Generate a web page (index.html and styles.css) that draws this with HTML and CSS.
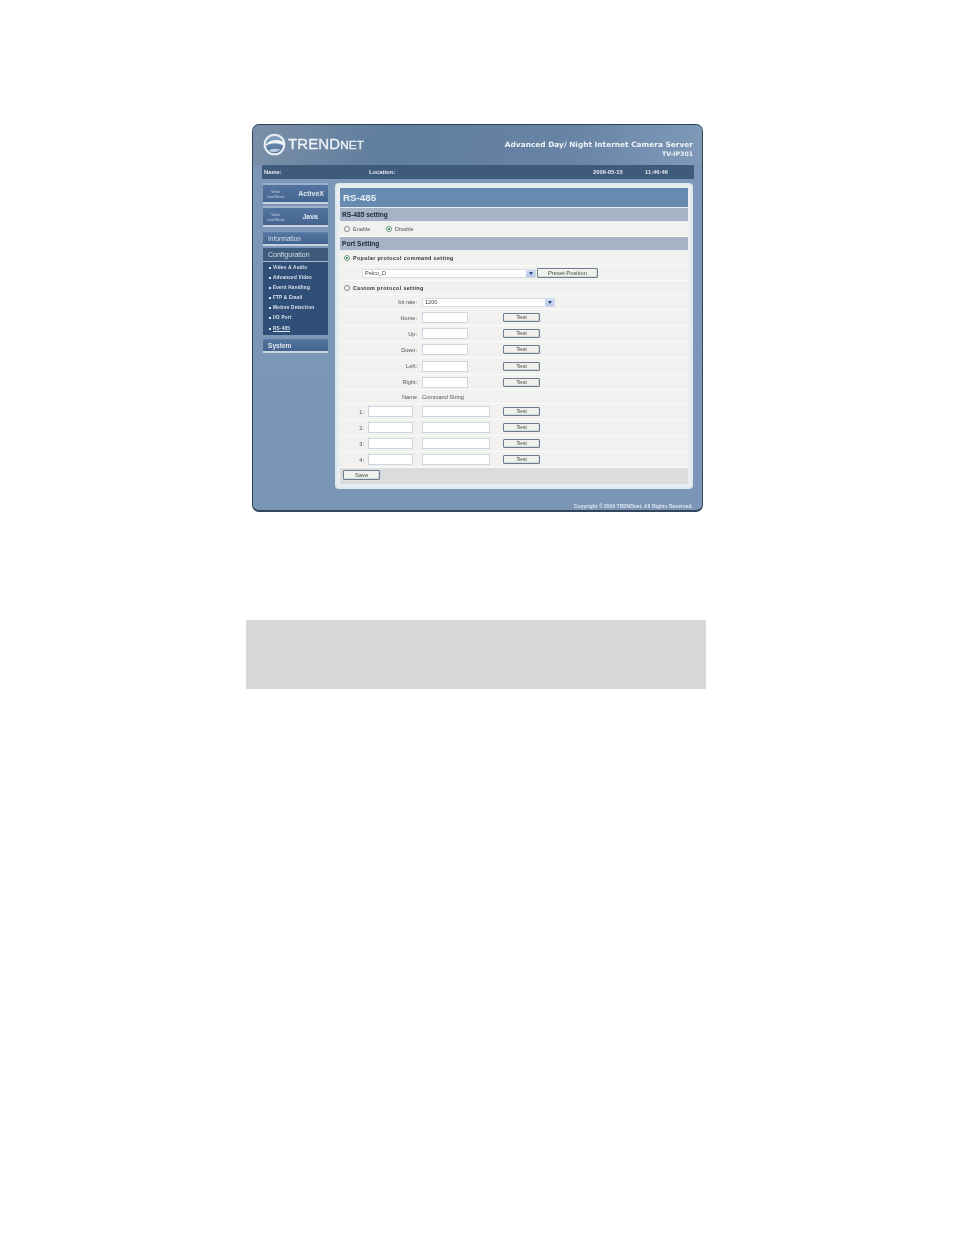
FILE: index.html
```html
<!DOCTYPE html>
<html lang="en">
<head>
<meta charset="utf-8">
<title>RS-485</title>
<link rel="stylesheet" href="styles.css">
</head>
<body>
<div class="page">
  <div class="shot">
    <header class="top">
      <div class="logo">
        <svg class="globe" viewBox="0 0 24 24" width="23" height="23" aria-hidden="true">
          <defs>
            <linearGradient id="gl" x1="0" y1="0" x2="0" y2="1">
              <stop offset="0" stop-color="#8fa9c4"/>
              <stop offset="1" stop-color="#3f6690"/>
            </linearGradient>
          </defs>
          <circle cx="12" cy="12" r="10.2" fill="url(#gl)" stroke="#e6ecf2" stroke-width="2.2"/>
          <path d="M3 12c4-5 12-6 18-3 .6 1.500.6 3 .3 4-6-3-12-3-18 0z" fill="#eef3f7"/>
          <path d="M6 18c4-2 8-2 12-1-3 4-9 4-12 1z" fill="#b9cbdc"/>
        </svg>
        <span class="brand">TREND<span class="brand-net">NET</span></span>
      </div>
      <div class="product">
        <div class="product-name">Advanced Day/ Night Internet Camera Server</div>
        <div class="product-model">TV-IP301</div>
      </div>
    </header>
    <div class="status">
      <span class="st-name">Name:</span>
      <span class="st-loc">Location:</span>
      <span class="st-date">2006-05-15</span>
      <span class="st-time">11:46:46</span>
    </div>
    <div class="body">
      <nav class="side">
        <a class="live"><span class="live-l">View<br>LiveShow</span><span class="live-r">ActiveX</span></a>
        <a class="live"><span class="live-l">View<br>LiveShow</span><span class="live-r live-j">Java</span></a>
        <a class="navbtn nav-info">Information</a>
        <div class="config">
          <div class="navbtn nav-conf">Configuration</div>
          <ul class="sub">
            <li>Video &amp; Audio</li>
            <li>Advanced Video</li>
            <li>Event Handling</li>
            <li>FTP &amp; Email</li>
            <li>Motion Detection</li>
            <li>I/O Port</li>
            <li class="cur">RS-485</li>
          </ul>
        </div>
        <a class="navbtn nav-sys">System</a>
      </nav>
      <main class="panel">
        <h1 class="title">RS-485</h1>
        <h2 class="bar bar-a">RS-485 setting</h2>
        <div class="row r15 radios">
          <label class="radio"><i class="dot"></i>Enable</label>
          <label class="radio"><i class="dot on"></i>Disable</label>
        </div>
        <h2 class="bar bar-b">Port Setting</h2>
        <div class="row r15 bold"><label class="radio"><i class="dot on"></i>Popular protocol command setting</label></div>
        <div class="row r15 selrow">
          <div class="select sel-a"><span>Pelco_D</span><b class="arrow"></b></div>
          <div class="btn btn-preset">Preset Position</div>
        </div>
        <div class="row r14 bold"><label class="radio"><i class="dot"></i>Custom protocol setting</label></div>
        <div class="row r15">
          <span class="lab">bit rate:</span>
          <div class="select sel-b"><span>1200</span><b class="arrow"></b></div>
        </div>
        <div class="row r16"><span class="lab">Home:</span><div class="inp i46"></div><div class="btn btn-test">Test</div></div>
        <div class="row r16"><span class="lab">Up:</span><div class="inp i46"></div><div class="btn btn-test">Test</div></div>
        <div class="row r16"><span class="lab">Down:</span><div class="inp i46"></div><div class="btn btn-test">Test</div></div>
        <div class="row r17"><span class="lab">Left:</span><div class="inp i46"></div><div class="btn btn-test">Test</div></div>
        <div class="row r15"><span class="lab">Right:</span><div class="inp i46"></div><div class="btn btn-test">Test</div></div>
        <div class="row r14"><span class="lab">Name</span><span class="cmd">Command String</span></div>
        <div class="row r16"><span class="num">1:</span><div class="inp i45"></div><div class="inp i68"></div><div class="btn btn-test t2">Test</div></div>
        <div class="row r16"><span class="num">2:</span><div class="inp i45"></div><div class="inp i68"></div><div class="btn btn-test t2">Test</div></div>
        <div class="row r16"><span class="num">3:</span><div class="inp i45"></div><div class="inp i68"></div><div class="btn btn-test t2">Test</div></div>
        <div class="row r16"><span class="num">4:</span><div class="inp i45"></div><div class="inp i68"></div><div class="btn btn-test t2">Test</div></div>
        <div class="savebar"><div class="btn btn-save">Save</div></div>
      </main>
    </div>
    <footer class="copy">Copyright © 2006 TRENDnet. All Rights Reserved.</footer>
  </div>
  <div class="graybox"></div>
</div>
</body>
</html>
```
FILE: styles.css
```css
* { box-sizing: border-box; }
html, body { margin: 0; padding: 0; background: #fff; }
body { font-family: "Liberation Sans", Arial, sans-serif; color: #333; }
.page { width: 954px; height: 1235px; padding-top: 124px; position: relative; }

.shot {
  margin-left: 252px; width: 451px; height: 388px;
  background: linear-gradient(180deg, #5f7d9e 0, #7d97b8 12%, #7b95b6 100%);
  border: 1px solid #33465c; border-radius: 7px;
  border-top-color: #2f4055; border-bottom-width: 2px;
  overflow: hidden; filter: blur(.35px);
}
.top {
  height: 40px; padding: 0 9px 0 10px;
  display: flex; justify-content: space-between; align-items: flex-start;
  background: linear-gradient(100deg, #7a8fa8 0, #5f7d9e 30%, #6884a5 70%, #7f99b9 100%);
}
.logo { display: flex; align-items: center; gap: 2px; padding-top: 8px; }
.globe { display: block; }
.brand { font-size: 15px; line-height: 20px; color: #eef2f6; letter-spacing: .1px; -webkit-text-stroke: .35px #eef2f6; }
.brand-net { font-size: 11.8px; }
.product { text-align: right; padding-top: 15px; color: #eef2f6; font-weight: 700; font-family: "DejaVu Sans", sans-serif; }
.product-name { font-size: 7.35px; line-height: 9px; letter-spacing: .03px; }
.product-model { font-size: 6.2px; line-height: 9px; }

.status {
  margin-left: 9px; width: 432px; height: 14px;
  background: #3f5b7c; color: #e4eaf0; font-size: 5.8px; font-weight: 700; line-height: 14px;
  display: flex; padding-left: 2px;
}
.st-name { width: 105px; }
.st-loc { width: 224px; }
.st-date { width: 52px; }

.body { display: flex; padding: 4px 0 0 10px; align-items: flex-start; }
.side { width: 65px; display: flex; flex-direction: column; margin-right: 7px; }
.live {
  height: 21px; display: flex; align-items: center; justify-content: space-between; margin-bottom: 2px;
  background: linear-gradient(180deg, #52749f, #446590); border-top: 2px solid #9cb0c9; border-bottom: 2px solid #c7d3e1;
  padding: 0 4px;
}
.live-l { font-size: 4px; line-height: 5px; text-align: center; color: #c9d5e3; }
.live-r { font-size: 7px; font-weight: 700; color: #dfe6ee; }
.live-j { padding-right: 6px; }
.navbtn {
  height: 14px; font-size: 6.6px; line-height: 11px; color: #d6dfea; padding-left: 5px;
  background: linear-gradient(180deg, #52749f, #446590); border-bottom: 2px solid #c7d3e1; border-top: 1px solid #5c7ea8;
}
.nav-info { margin-top: 3px; }
.config { margin-top: 2px; background: #2f4f78; height: 87px; }
.nav-conf { background: #3f5b7c; border-bottom: 1px solid #a9bacd; font-size: 7px; height: 14px; line-height: 13px; border-top: 0; }
.sub { list-style: none; margin: 0; padding: 1px 0 0 5px; }
.sub li { height: 10.1px; line-height: 10px; font-size: 4.6px; font-weight: 700; letter-spacing: .25px; color: #dfe6ee; padding-left: 5px; position: relative; }
.sub li::before { content: ""; position: absolute; left: 1px; top: 4px; width: 2px; height: 2px; background: #dfe6ee; }
.sub .cur { text-decoration: underline; }
.nav-sys { margin-top: 4px; font-weight: 700; color: #dde5ee; font-size: 6.6px; }

.panel {
  width: 358px; height: 306px; background: #e8edf2; border-radius: 4px; border: 2px solid #dfe7ef;
  padding: 3px 3px 0 3px; display: flex; flex-direction: column;
}
.title { margin: 0 0 1px; height: 19px; background: #668ab0; color: #e8edf3; font-size: 9.8px; line-height: 19px; font-weight: 700; padding-left: 3px; flex: none; }
.bar { margin: 0; height: 13px; background: #a5b3c4; font-size: 6.6px; line-height: 13px; font-weight: 700; color: #222c38; padding-left: 2px; flex: none; }
.bar-a { margin-bottom: 1px; }
.bar-b { margin-bottom: 1px; }
.row { display: flex; align-items: center; background: #f1f1f0; border-bottom: 1px solid #fbfbfa; font-size: 5.6px; color: #555; flex: none; }
.r14 { height: 14px; }
.r15 { height: 15px; }
.r16 { height: 16px; }
.r17 { height: 17px; }
.radio { display: inline-flex; align-items: center; padding-left: 4px; }
.radios .radio:first-child { width: 42px; }
.bold { font-weight: 700; color: #333; font-size: 5.4px; letter-spacing: .36px; }
.dot { width: 6px; height: 6px; border-radius: 50%; border: 1px solid #7a8290; background: #fff; margin-right: 3px; display: block; flex: none; }
.dot.on { background: radial-gradient(circle, #4a9a62 0 1px, #fff 1.2px); border-color: #6a9a80; }
.selrow { padding-left: 22px; }
.select { height: 9px; background: #fff; border: 1px solid #d5dce4; display: flex; align-items: center; justify-content: space-between; color: #444; padding-left: 2px; }
.sel-a { width: 174px; }
.sel-b { width: 133px; }
.arrow { width: 9px; height: 8px; background: linear-gradient(180deg, #d4dff2, #b6c9ea); border-radius: 1px; position: relative; display: block; }
.arrow::after { content: ""; position: absolute; left: 2.5px; top: 3px; border: 2px solid transparent; border-top: 3px solid #2d4a80; border-bottom: 0; }
.btn { background: #f1f1ec; border: 1px solid #6d7d92; border-radius: 1px; text-align: center; color: #4a4a4a; font-size: 5.8px; box-shadow: inset -1px -1px 0 #d6d8dc; }
.btn-preset { width: 61px; height: 10px; line-height: 8px; margin-left: 1px; }
.lab { width: 77px; text-align: right; margin-right: 5px; }
.inp { height: 11px; background: #fff; border: 1px solid #ccd6e0; }
.i46 { width: 46px; }
.i45 { width: 45px; }
.i68 { width: 68px; margin-left: 9px; }
.btn-test { width: 37px; height: 9px; line-height: 7px; margin-left: 35px; }
.t2 { margin-left: 13px; }
.num { width: 24px; text-align: right; margin-right: 4px; }
.savebar { height: 16px; background: #dcdcdc; padding: 2px 0 0 3px; flex: none; }
.btn-save { width: 37px; height: 10px; line-height: 8px; }

.copy { text-align: right; padding: 14px 9px 0 0; font-size: 4.9px; letter-spacing: .07px; line-height: 8px; color: #dfe6ee; font-weight: 700; }

.graybox { margin: 108px 0 0 246px; width: 460px; height: 69px; background: #d8d8d8; }
```
